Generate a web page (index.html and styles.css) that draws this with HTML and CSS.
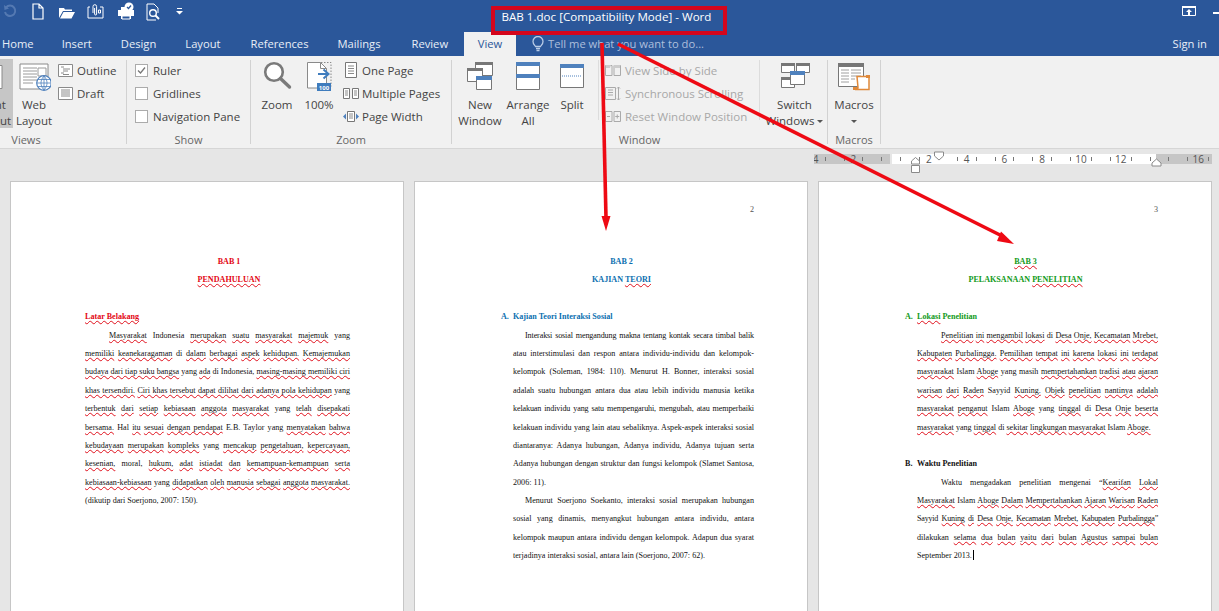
FILE: index.html
```html
<!DOCTYPE html>
<html lang="id">
<head>
<meta charset="utf-8">
<title>BAB 1.doc [Compatibility Mode] - Word</title>
<link rel="stylesheet" href="styles.css">
</head>
<body>
<div class="app">
  <header class="titlebar">
    <div class="qat">
      <svg width="14" height="14" viewBox="0 0 14 14" class="q-undo"><path d="M3 3.500A5.200 5.200 0 1 1 2 8" fill="none" stroke="#5f82b8" stroke-width="2"/><path d="M1 1l.5 5 4.500-1.500z" fill="#5f82b8"/></svg>
      <svg width="14" height="17" viewBox="0 0 14 17" class="q-new"><path d="M2 1h6l4 4v11H2z M8 1v4h4" fill="#2b579a" stroke="#fff" stroke-width="1.200"/></svg>
      <svg width="18" height="14" viewBox="0 0 18 14" class="q-open"><path d="M1 13V3h5l1 1.500h7V6H5L1 13zM5.500 7H17l-3.500 6.500H2z" fill="#fff"/></svg>
      <svg width="17" height="17" viewBox="0 0 17 17" class="q-attach"><path d="M3 4H1v11h15V4h-3" fill="none" stroke="#fff"/><path d="M6 10V3.500a1.800 1.800 0 0 1 3.600 0V11a1 1 0 0 1-2 0V5" fill="none" stroke="#fff"/><path d="M11.500 7h2v3h-2z" fill="none" stroke="#fff"/></svg>
      <svg width="18" height="18" viewBox="0 0 18 18" class="q-check"><path d="M4 9V5h5v4zM4 13h10v4H4z" fill="#fff"/><path d="M1 8h16v6H1z" fill="#fff"/><circle cx="12" cy="5" r="4.500" fill="#fff"/><path d="M10 5l1.500 1.500L14 3.500" stroke="#2b579a" stroke-width="1.300" fill="none"/><path d="M5 14h8v3H5z" fill="#2b579a" stroke="#fff"/></svg>
      <svg width="15" height="18" viewBox="0 0 15 18" class="q-prev"><path d="M1 1h7l4 4v5M1 1v16h9" fill="none" stroke="#fff"/><circle cx="7" cy="10" r="3.300" fill="none" stroke="#fff" stroke-width="1.400"/><path d="M9.500 12.500L13 16" stroke="#fff" stroke-width="2"/></svg>
      <svg width="7" height="7" viewBox="0 0 7 7" class="q-more"><path d="M1 0h5v1H1zM0 3h7L3.500 6.500z" fill="#fff"/></svg>
    </div>
    <div class="doc-title">BAB 1.doc [Compatibility Mode] - Word</div>
    <div class="win-ctrl">
      <svg width="14" height="10" viewBox="0 0 14 10"><path d="M.5.500h13v9H.5z" fill="none" stroke="#fff"/><path d="M0 0h14v2H0zM7 3l3 3H8v3H6V6H4z" fill="#fff"/></svg>
      <span class="minimize"></span>
    </div>
  </header>

  <nav class="tabs">
    <span class="tab">Home</span>
    <span class="tab">Insert</span>
    <span class="tab">Design</span>
    <span class="tab">Layout</span>
    <span class="tab">References</span>
    <span class="tab">Mailings</span>
    <span class="tab">Review</span>
    <span class="tab active">View</span>
    <span class="tell">
      <svg width="12" height="16" viewBox="0 0 12 16"><path d="M3.500 10.500C2.500 9 1 8 1 5.500a5 5 0 0 1 10 0C11 8 9.500 9 8.500 10.500z" fill="none" stroke="#b9cbe6" stroke-width="1.300"/><path d="M4 12.500h4M4.500 14.500h3" stroke="#b9cbe6" stroke-width="1.300"/></svg>
      Tell me what you want to do...
    </span>
    <span class="signin">Sign in</span>
  </nav>

  <section class="ribbon">
    <div class="group g-views">
      <div class="g-body">
        <div class="btn b-read"><div class="ic"></div><div class="bt">Read<br>Mode</div></div>
        <div class="btn b-print"><div class="ic"><svg width="40" height="32" viewBox="0 0 40 32"><path d="M6 6.500h23v23H6z" fill="#fff" stroke="#8a8a8a"/></svg></div><div class="bt">Print<br>Layout</div></div>
        <div class="btn b-web">
          <div class="ic"><svg width="34" height="32" viewBox="0 0 34 32"><path d="M3 5h28v25H3z" fill="#fff" stroke="#8a8a8a"/><path d="M6 9h14M6 12h14M6 15h14M6 18h14M6 21h14M6 24h10" stroke="#9a9a9a"/><path d="M21 9h8v8h-8z" fill="#fff" stroke="#9a9a9a"/><circle cx="27" cy="24" r="7.300" fill="#fff" stroke="#4f81bd" stroke-width="1.200"/><path d="M20 24h14M21 20.500h12M21 27.500h12M27 17v14M27 17c-4 4-4 10 0 14M27 17c4 4 4 10 0 14" stroke="#4f81bd" fill="none" stroke-width=".8"/></svg></div>
          <div class="bt">Web<br>Layout</div>
        </div>
        <div class="col c-views">
          <div class="row"><svg class="ri" width="15" height="13" viewBox="0 0 15 13"><path d="M.5.500h14v12H.5z" fill="#fff" stroke="#8a8a8a"/><path d="M3 3h3M5 5h7M5 7h5M3 9h3M5 10.500h6" stroke="#8a8a8a"/></svg>Outline</div>
          <div class="row"><svg class="ri" width="15" height="13" viewBox="0 0 15 13"><path d="M.5.500h14v12H.5z" fill="#fff" stroke="#8a8a8a"/><path d="M3 3h9M3 5h9M3 7h9M3 9h9" stroke="#8a8a8a"/></svg>Draft</div>
        </div>
      </div>
      <div class="glabel">Views</div>
    </div>

    <div class="group g-show">
      <div class="g-body">
        <div class="col">
          <label class="row"><span class="cb"><svg width="11" height="11" viewBox="0 0 11 11"><path d="M2 5.500l2.500 2.500L9 2.500" fill="none" stroke="#777" stroke-width="1.300"/></svg></span>Ruler</label>
          <label class="row"><span class="cb"></span>Gridlines</label>
          <label class="row"><span class="cb"></span>Navigation Pane</label>
        </div>
      </div>
      <div class="glabel">Show</div>
    </div>

    <div class="group g-zoom">
      <div class="g-body">
        <div class="btn b-zoom"><div class="ic"><svg width="30" height="32" viewBox="0 0 30 32"><circle cx="12" cy="13" r="8.800" fill="#fff" stroke="#7a7a7a" stroke-width="2.600"/><path d="M18.500 19.500l9 8.500" stroke="#7a7a7a" stroke-width="3.400" stroke-linecap="round"/></svg></div><div class="bt">Zoom</div></div>
        <div class="btn b-100"><div class="ic"><svg width="30" height="32" viewBox="0 0 30 32"><path d="M3.500 3.500h13l6 6V29h-19z" fill="#fff" stroke="#8a8a8a"/><path d="M16.500 3.500v6h6" fill="none" stroke="#8a8a8a"/><path d="M17 3.500h10v24" fill="none" stroke="#8a8a8a" stroke-dasharray="1.500 1.500"/><path d="M14 15h9M19.500 10.500l5 4.500-5 4.500" fill="none" stroke="#3f7cbd" stroke-width="2"/><rect x="13" y="24" width="14" height="8" fill="#3f7cbd"/><text x="20" y="30.500" class="t100">100</text></svg></div><div class="bt">100%</div></div>
        <div class="col c-zoom">
          <div class="row"><span class="si"><svg width="13" height="17" viewBox="0 0 13 17"><path d="M.5.500h11v15H.5z" fill="#fff" stroke="#777"/><path d="M3 4h6M3 6.500h6M3 9h6M3 11.500h6" stroke="#8a8a8a"/></svg></span>One Page</div>
          <div class="row"><span class="si"><svg width="16" height="11" viewBox="0 0 16 11"><path d="M.5.500h6v10h-6zM9.500.500h6v10h-6z" fill="#fff" stroke="#777"/><path d="M2 3h3M2 5h3M2 7h3M11 3h3M11 5h3M11 7h3" stroke="#8a8a8a"/></svg></span>Multiple Pages</div>
          <div class="row"><span class="si"><svg width="16" height="11" viewBox="0 0 16 11"><path d="M4.500.500h7v10h-7z" fill="#fff" stroke="#777"/><path d="M6 3h4M6 5h4M6 7h4" stroke="#8a8a8a"/><path d="M3 2.500v6L0 5.500zM13 2.500v6l3-3z" fill="#4f81bd"/></svg></span>Page Width</div>
        </div>
      </div>
      <div class="glabel">Zoom</div>
    </div>

    <div class="group g-window">
      <div class="g-body">
        <div class="btn b-new"><div class="ic"><svg width="30" height="32" viewBox="0 0 30 32"><path d="M10.500 3.500h17v13h-17z" fill="#fff" stroke="#777"/><path d="M10 3h18v3H10z" fill="#777"/><path d="M2.500 9.500h15v13h-15z" fill="#fff" stroke="#777"/><path d="M2 9h16v3H2z" fill="#777"/><path d="M11.500 17.500h15v13h-15z" fill="#fff" stroke="#777"/><path d="M11 17h16v4H11z" fill="#4f81bd"/></svg></div><div class="bt">New<br>Window</div></div>
        <div class="btn b-arr"><div class="ic"><svg width="26" height="32" viewBox="0 0 26 32"><path d="M1.500 3.500h23v27h-23z" fill="#fff" stroke="#777"/><path d="M1 3h24v4H1zM1 15h24v4H1z" fill="#4f81bd"/></svg></div><div class="bt">Arrange<br>All</div></div>
        <div class="btn b-split"><div class="ic"><svg width="26" height="32" viewBox="0 0 26 32"><path d="M1.500 5.500h23v23h-23z" fill="#fff" stroke="#777"/><path d="M1 5h24v4H1z" fill="#4f81bd"/><path d="M3 17h20" stroke="#4f81bd" stroke-dasharray="1 1"/></svg></div><div class="bt">Split</div></div>
        <div class="isep"></div>
        <div class="col c-win">
          <div class="row off"><svg class="ri" width="16" height="13" viewBox="0 0 16 13"><path d="M.5 1.500h6.500v10H.5zM9 1.500h6.500v10H9z" fill="none" stroke="#aaa"/><path d="M1 1h5l-1 3H1zM9 1h6v3H9z" fill="#ccc"/></svg>View Side by Side</div>
          <div class="row off"><svg class="ri" width="16" height="15" viewBox="0 0 16 15"><path d="M.5 1.500h10v12H.5z" fill="none" stroke="#aaa"/><path d="M3 4h5M3 6.500h5M3 9h5M13.500 1v13M12 2.500l1.500-1.500L15 2.500M12 12.500l1.500 1.500 1.500-1.500" fill="none" stroke="#aaa"/></svg>Synchronous Scrolling</div>
          <div class="row off"><svg class="ri" width="16" height="13" viewBox="0 0 16 13"><path d="M.5 1.500h6.500v10H.5zM9 1.500h6.500v10H9z" fill="none" stroke="#aaa"/><path d="M2 6.500h3M12.250 4.500v4M10.250 6.500h4" stroke="#aaa"/></svg>Reset Window Position</div>
        </div>
        <div class="isep"></div>
        <div class="btn b-switch"><div class="ic"><svg width="32" height="32" viewBox="0 0 32 32"><path d="M2.500 4.500h13v9h-13zM17.500 4.500h13v9h-13zM2.500 18.500h13v10h-13z" fill="#fff" stroke="#777"/><path d="M2 4h14v3H2zM17 4h14v3H17zM2 18h14v3H2z" fill="#777"/><path d="M11.500 12.500h14v13h-14z" fill="#fff" stroke="#777"/><path d="M11 12h15v4H11z" fill="#4f81bd"/></svg></div><div class="bt">Switch<br>Windows<span class="caret"></span></div></div>
      </div>
      <div class="glabel">Window</div>
    </div>

    <div class="group g-macros">
      <div class="g-body">
        <div class="btn b-macros"><div class="ic"><svg width="34" height="32" viewBox="0 0 34 32"><path d="M1.500 5.500h25v22h-25z" fill="#fff" stroke="#777"/><path d="M1 4h26v4H1z" fill="#777"/><path d="M4 11h8M14 11h10M4 14h8M14 14h10M4 17h8M14 17h10M4 20h8M14 20h4M4 23h8" stroke="#a0a0a0"/><path d="M20 17.500h12v13H18c2 0 3-.5 3-2z" fill="#fff" stroke="#e0893a" stroke-width="1.500"/><path d="M16 28h5v3h-5zM29 16h4v3h-4z" fill="#e0893a"/></svg></div><div class="bt">Macros<br><span class="caret solo"></span></div></div>
      </div>
      <div class="glabel">Macros</div>
    </div>
  </section>

  <div class="rulerbar">
    <div class="ruler">
      <div class="ticks">
        <span>4</span><span class="tk"></span><span></span><span class="tk"></span><span>2</span><span class="tk"></span><span></span><span class="tk"></span><span></span><span class="tk"></span><span></span><span class="tk"></span>
        <span>2</span><span></span><span></span><span class="tk"></span><span>4</span><span class="tk"></span><span></span><span class="tk"></span><span>6</span><span class="tk"></span><span></span><span class="tk"></span>
        <span>8</span><span class="tk"></span><span></span><span class="tk"></span><span>10</span><span class="tk"></span><span></span><span class="tk"></span><span>12</span><span class="tk"></span><span></span><span class="tk"></span>
        <span></span><span class="tk"></span><span></span><span class="tk"></span><span>16</span><span class="tk"></span>
      </div>
    </div>
  </div>

  <main class="doc">
    <article class="page p1">
      <div class="pageno"></div>
      <p class="ln ctr red b">BAB 1</p>
      <p class="ln ctr red b"><u>PENDAHULUAN</u></p>
      <p class="ln"></p>
      <p class="ln red b"><u>Latar Belakang</u></p>
      <p class="ln j ind"><u>Masyarakat</u> Indonesia <u>merupakan</u> <u>suatu</u> <u>masyarakat</u> <u>majemuk</u> yang</p>
      <p class="ln j"><u>memiliki</u> <u>keanekaragaman</u> di <u>dalam</u> <u>berbagai</u> <u>aspek</u> <u>kehidupan.</u> <u>Kemajemukan</u></p>
      <p class="ln j"><u>budaya dari tiap suku bangsa</u> yang <u>ada</u> di Indonesia, <u>masing-masing memiliki ciri</u></p>
      <p class="ln j"><u>khas tersendiri.</u> <u>Ciri khas tersebut dapat dilihat dari adanya pola kehidupan</u> yang</p>
      <p class="ln j"><u>terbentuk</u> <u>dari</u> <u>setiap</u> <u>kebiasaan</u> <u>anggota</u> <u>masyarakat</u> yang <u>telah</u> <u>disepakati</u></p>
      <p class="ln j"><u>bersama.</u> Hal <u>itu</u> <u>sesuai</u> <u>dengan pendapat</u> E.B. Taylor yang <u>menyatakan</u> <u>bahwa</u></p>
      <p class="ln j"><u>kebudayaan</u> <u>merupakan</u> <u>kompleks</u> yang <u>mencakup</u> <u>pengetahuan,</u> <u>kepercayaan,</u></p>
      <p class="ln j"><u>kesenian,</u> moral, <u>hukum,</u> <u>adat</u> <u>istiadat</u> <u>dan</u> <u>kemampuan-kemampuan</u> <u>serta</u></p>
      <p class="ln j"><u>kebiasaan-kebiasaan</u> yang <u>didapatkan</u> <u>oleh</u> <u>manusia</u> <u>sebagai</u> <u>anggota</u> <u>masyarakat.</u></p>
      <p class="ln">(dikutip dari Soerjono, 2007: 150).</p>
    </article>

    <article class="page p2">
      <div class="pageno">2</div>
      <p class="ln ctr blue b">BAB 2</p>
      <p class="ln ctr blue b">KAJIAN <u>TEORI</u></p>
      <p class="ln"></p>
      <p class="ln blue b hang"><span class="mk">A.</span>Kajian Teori Interaksi Sosial</p>
      <p class="ln j ind tight">Interaksi sosial mengandung makna tentang kontak secara timbal balik</p>
      <p class="ln j">atau interstimulasi dan respon antara individu-individu dan kelompok-</p>
      <p class="ln j">kelompok (Soleman, 1984: 110). Menurut H. Bonner, interaksi sosial</p>
      <p class="ln j">adalah suatu hubungan antara dua atau lebih individu manusia ketika</p>
      <p class="ln j tight">kelakuan individu yang satu mempengaruhi, mengubah, atau memperbaiki</p>
      <p class="ln j">kelakuan individu yang lain atau sebaliknya. Aspek-aspek interaksi sosial</p>
      <p class="ln j">diantaranya: Adanya hubungan, Adanya individu, Adanya tujuan serta</p>
      <p class="ln j">Adanya hubungan dengan struktur dan fungsi kelompok (Slamet Santosa,</p>
      <p class="ln">2006: 11).</p>
      <p class="ln j ind">Menurut Soerjono Soekanto, interaksi sosial merupakan hubungan</p>
      <p class="ln j">sosial yang dinamis, menyangkut hubungan antara individu, antara</p>
      <p class="ln j">kelompok maupun antara individu dengan kelompok. Adapun dua syarat</p>
      <p class="ln">terjadinya interaksi sosial, antara lain (Soerjono, 2007: 62).</p>
    </article>

    <article class="page p3">
      <div class="pageno">3</div>
      <p class="ln ctr green b"><u>BAB 3</u></p>
      <p class="ln ctr green b">PELAKSANAAN <u>PENELITIAN</u></p>
      <p class="ln"></p>
      <p class="ln green b hang"><span class="mk">A.</span><u>Lokasi</u> Penelitian</p>
      <p class="ln j ind"><u>Penelitian</u> <u>ini</u> <u>mengambil</u> <u>lokasi</u> di <u>Desa</u> <u>Onje,</u> <u>Kecamatan</u> <u>Mrebet,</u></p>
      <p class="ln j"><u>Kabupaten</u> <u>Purbalingga.</u> <u>Pemilihan</u> <u>tempat</u> <u>ini</u> <u>karena</u> <u>lokasi</u> <u>ini</u> <u>terdapat</u></p>
      <p class="ln j"><u>masyarakat</u> Islam <u>Aboge</u> yang masih <u>mempertahankan</u> <u>tradisi</u> <u>atau</u> <u>ajaran</u></p>
      <p class="ln j"><u>warisan</u> <u>dari</u> <u>Raden</u> Sayyid <u>Kuning.</u> <u>Objek</u> <u>penelitian</u> <u>nantinya</u> <u>adalah</u></p>
      <p class="ln j"><u>masyarakat</u> <u>penganut</u> Islam <u>Aboge</u> yang <u>tinggal</u> di <u>Desa</u> <u>Onje</u> <u>beserta</u></p>
      <p class="ln"><u>masyarakat</u> yang <u>tinggal</u> di <u>sekitar</u> <u>lingkungan</u> <u>masyarakat</u> Islam <u>Aboge.</u></p>
      <p class="ln"></p>
      <p class="ln b hang"><span class="mk">B.</span>Waktu Penelitian</p>
      <p class="ln j ind">Waktu mengadakan penelitian mengenai “<u>Kearifan</u> <u>Lokal</u></p>
      <p class="ln j"><u>Masyarakat</u> Islam <u>Aboge</u> <u>Dalam</u> <u>Mempertahankan</u> <u>Ajaran</u> <u>Warisan</u> <u>Raden</u></p>
      <p class="ln j tight2">Sayyid <u>Kuning</u> <u>di</u> <u>Desa</u> <u>Onje,</u> <u>Kecamatan</u> <u>Mrebet,</u> <u>Kabupaten</u> <u>Purbalingga</u>”</p>
      <p class="ln j">dilakukan <u>selama</u> <u>dua</u> <u>bulan</u> <u>yaitu</u> <u>dari</u> <u>bulan</u> <u>Agustus</u> <u>sampai</u> <u>bulan</u></p>
      <p class="ln">September 2013.<span class="cursor"></span></p>
    </article>
  </main>

  <svg class="markers" width="1219" height="190" viewBox="0 0 1219 190">
    <path d="M934.500 152h9v4l-4.500 4-4.500-4z" fill="#fff" stroke="#8a8a8a"/>
    <path d="M911.500 164v-3l4-3.500 4 3.500v3zM911.500 165.500h8v7h-8z" fill="#fff" stroke="#8a8a8a"/>
    <path d="M1152 166v-3l4.500-4 4.500 4v3z" fill="#fff" stroke="#8a8a8a"/>
  </svg>
  <svg class="notes" width="1219" height="611" viewBox="0 0 1219 611">
    <path d="M602 43L606 218" stroke="#ee0a14" stroke-width="3.600" fill="none"/>
    <path d="M601.500 216h9L606 231z" fill="#ee0a14"/>
    <path d="M618 44L1004 237" stroke="#ee0a14" stroke-width="3.600" fill="none"/>
    <path d="M1001 231.500L1014 244 997 241z" fill="#ee0a14"/>
    <rect x="493" y="8" width="232" height="25" fill="none" stroke="#d4061c" stroke-width="4"/>
  </svg>
</div>
</body>
</html>
```
FILE: styles.css
```css
* { box-sizing: border-box; }
html, body { margin: 0; height: 100%; overflow: hidden; }
body { font-family: "Open Sans", "Noto Sans", sans-serif; color: #444; }
.app { position: relative; width: 1219px; height: 611px; overflow: hidden; background: #e6e6e6; display: flex; flex-direction: column; }

.titlebar { height: 32px; flex: none; background: #2b579a; display: grid; grid-template-columns: 1fr auto 1fr; padding-right: 6px; align-items: start; }
.qat { display: flex; align-items: flex-start; padding-top: 3px; }
.qat svg { flex: none; }
.q-undo { margin: 1px 0 0 3px; opacity: .8; }
.q-new { margin: 0 0 0 14px; }
.q-open { margin: 2px 0 0 13px; }
.q-attach { margin: 0 0 0 11px; }
.q-check { margin: -1px 0 0 13px; }
.q-prev { margin: 0 0 0 11px; }
.q-more { margin: 5px 0 0 15px; }
.doc-title { color: #fff; font-size: 11.600px; line-height: 17px; padding-top: 8px; white-space: nowrap; }
.win-ctrl { display: flex; justify-content: flex-end; align-items: flex-start; padding-top: 6px; margin-right: -6px; }
.win-ctrl svg { margin-right: 17px; }
.minimize { width: 6px; height: 2px; background: #fff; margin-top: 6px; }

.tabs { height: 24px; flex: none; background: #2b579a; display: flex; align-items: stretch; color: #fff; font-size: 11.200px; line-height: 24px; padding-left: 2px; }
.tab { margin-right: 29px; white-space: nowrap; color: #e8eef7; }
.tab:nth-child(1) { margin-right: 28px; }
.tab:nth-child(4) { margin-right: 30px; }
.tab:nth-child(6) { margin-right: 31px; }
.tab:nth-child(7) { margin-right: 16px; }
.tab.active { background: #f1f1f1; color: #2b579a; width: 52px; margin-right: 0; text-align: center; }
.tell { margin-left: 16px; color: #aebfdc; display: flex; align-items: center; gap: 4px; white-space: nowrap; }
.signin { margin-left: auto; margin-right: 12px; color: #e8eef7; }

.ribbon { height: 93px; flex: none; background: #f1f1f1; border-bottom: 1px solid #d6d6d6; display: flex; margin-left: -74px; padding-top: 4px; font-size: 11.500px; line-height: 16px; }
.group { height: 84px; flex: none; border-right: 1px solid #d2d2d2; display: flex; flex-direction: column; }
.g-views { width: 201px; }
.g-show { width: 124px; }
.g-zoom { width: 201px; }
.g-window { width: 376px; }
.g-macros { width: 53px; }
.g-body { height: 72px; display: flex; align-items: flex-start; }
.glabel { height: 12px; text-align: center; color: #666; font-size: 11px; white-space: nowrap; }
.btn { flex: none; height: 69px; margin-top: -1px; text-align: center; white-space: nowrap; }
.ic { height: 33px; display: flex; justify-content: center; align-items: flex-start; }
.ic svg { display: block; }
.bt { padding-top: 5px; }
.b-read { width: 47px; }
.b-print { width: 40px; background: #c6c6c6; }
.b-web { width: 42px; }
.col { display: flex; flex-direction: column; margin-top: -1px; }
.row { height: 23px; display: flex; align-items: center; white-space: nowrap; }
.c-views { margin-left: 3px; }
.ri { flex: none; margin-right: 4px; }
.g-show .col { padding-left: 8px; }
.cb { width: 13px; height: 13px; background: #fff; border: 1px solid #ababab; margin-right: 5px; display: flex; align-items: center; justify-content: center; }
.b-zoom { width: 52px; }
.b-100 { width: 32px; }
.c-zoom { margin-left: 8px; }
.si { width: 16px; height: 17px; margin-right: 3px; display: flex; align-items: center; justify-content: center; flex: none; }
.t100 { font-family: "Open Sans", sans-serif; font-size: 6px; font-weight: 700; fill: #fff; text-anchor: middle; }
.g-window .g-body { padding-left: 4px; }
.b-new, .b-arr { width: 48px; }
.b-split { width: 40px; }
.isep { flex: none; width: 1px; height: 60px; background: #dcdcdc; margin: 0 0 0 6px; }
.c-win { margin-left: 6px; width: 150px; color: #a8a8a8; }
.b-switch { width: 65px; margin-left: 2px; }
.b-macros { width: 52px; }
.caret { display: inline-block; width: 0; height: 0; border: 3px solid transparent; border-top: 3px solid #555; border-bottom: 0; margin-left: 3px; vertical-align: 2px; }
.caret.solo { margin-left: 0; }

.rulerbar { height: 32px; flex: none; padding: 5px 7px 0 814px; }
.ruler { height: 10px; overflow: hidden; background: linear-gradient(90deg, #c6c6c6 76px, #e6e6e6 76px 78px, #fff 78px 342px, #c6c6c6 342px); }
.ticks { display: flex; margin-left: -3px; color: #555; font-size: 10px; line-height: 10px; width: 420px; }
.ticks span { flex: 0 0 9.450px; height: 10px; text-align: center; white-space: nowrap; display: flex; justify-content: center; align-items: center; }
.tk::after { content: ""; width: 1px; height: 4px; background: #777; }

.doc { flex: 1; display: flex; padding-left: 10px; gap: 10px; min-height: 0; overflow: hidden; }
.page { flex: 0 0 394px; height: 520px; background: #fff; border: 1px solid #c6c6c6; border-bottom: 0; padding: 21px 53px 0 98px; font-family: "Liberation Serif", "Times New Roman", serif; font-size: 8.100px; color: #111; }
.p1 { padding-left: 74px; }
.pageno { height: 14px; margin: 0 0 36px; text-align: right; color: #555; line-height: 14px; }
.ln { margin: 0; height: 18.400px; line-height: 18.400px; white-space: nowrap; }
.ctr { text-align: center; }
.p1 .ctr { margin-left: 23px; }
.p2 .ctr, .p3 .ctr { margin-right: 24px; }
.j { text-align: justify; text-align-last: justify; white-space: normal; }
.tight { letter-spacing: -.12px; }
.tight2 { letter-spacing: -.22px; }
.ind { text-indent: 12px; }
.p1 .ind, .p3 .ind { text-indent: 24px; }
.b { font-weight: 700; }
.red { color: #e30613; }
.blue { color: #0b6fb0; }
.green { color: #119a20; }
.hang { position: relative; }
.mk { position: absolute; left: -12px; }
u { text-decoration: underline wavy #e0101c; text-decoration-thickness: 1px; text-decoration-skip-ink: none; text-underline-offset: 1px; }
.cursor { display: inline-block; width: 1px; height: 10px; background: #000; vertical-align: -2px; margin-left: 1px; }

.markers, .notes { position: absolute; left: 0; top: 0; pointer-events: none; }
```
